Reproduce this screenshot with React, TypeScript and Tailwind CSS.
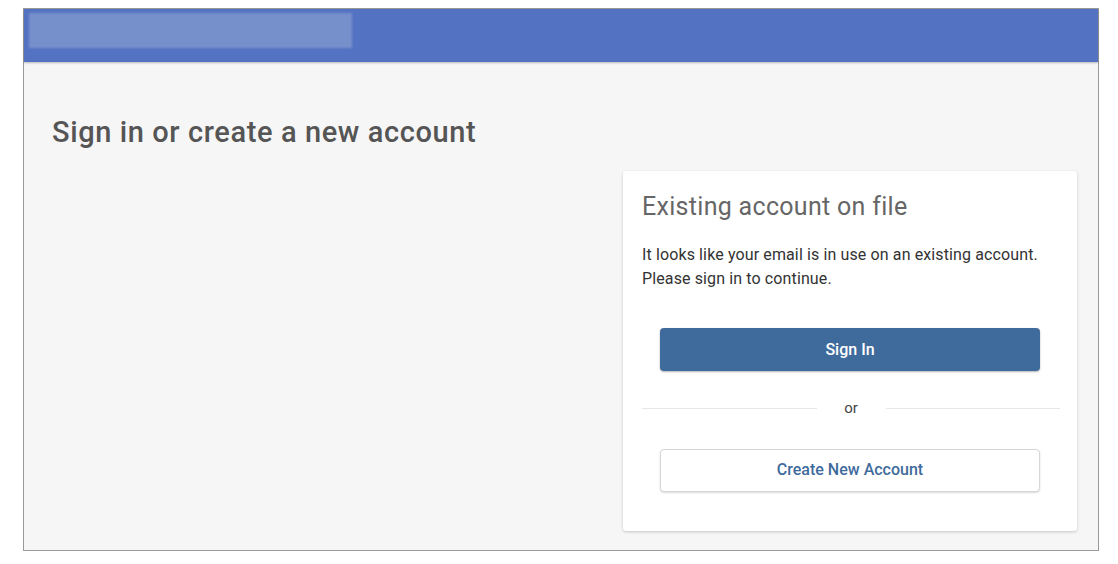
import React from "react";

export default function App() {
  return (
    <div className="w-[1118px] h-[564px] bg-white pt-2 pl-[23px]" style={{ fontFamily: "Roboto, 'Liberation Sans', sans-serif" }}>
      <div className="w-[1076px] h-[543px] border border-[#9a9a9a] bg-[#f6f6f6] flex flex-col">
        <header className="h-[53px] bg-[#5472c2] shadow-[0_1px_2px_rgba(0,0,0,0.25)] pt-1 pl-[5px] shrink-0">
          <div className="w-[323px] h-[35px] bg-[#7590cb] blur-[1px]" />
        </header>
        <div className="flex-1 flex flex-col">
          <h1 className="mt-[54px] ml-[28px] text-[29px] leading-[32px] tracking-[0.6px] text-[#555] font-medium">Sign in or create a new account</h1>
          <div className="flex justify-end pr-[21px] mt-[23px]">
            <div className="w-[454px] h-[360px] bg-white rounded-[3px] shadow-[0_1px_3px_rgba(0,0,0,0.2)] px-[19px] pt-[20px]">
              <h2 className="text-[25px] leading-[32px] tracking-[0.3px] text-[#666]">Existing account on file</h2>
              <p className="mt-[20px] text-[16px] leading-[24px] tracking-[0.12px] text-[#333]">
                It looks like your email is in use on an existing account.<br />Please sign in to continue.
              </p>
              <div className="px-[18px] mt-[37px]">
                <button className="w-full h-[43px] rounded-[4px] bg-[#3f6b9c] text-white text-[16px] font-medium shadow-[0_1px_2px_rgba(0,0,0,0.3)]">Sign In</button>
              </div>
              <div className="flex items-center mt-[26px] -mr-[2px]">
                <div className="flex-1 h-px bg-[#e6e6e6]" />
                <span className="w-[69px] text-center text-[15px] text-[#444]">or</span>
                <div className="flex-1 h-px bg-[#e6e6e6]" />
              </div>
              <div className="px-[18px] mt-[29px]">
                <button className="w-full h-[43px] rounded-[4px] bg-white border border-[#d6d6d6] text-[#3f6b9c] text-[16px] font-medium shadow-[0_1px_2px_rgba(0,0,0,0.15)]">Create New Account</button>
              </div>
            </div>
          </div>
        </div>
      </div>
    </div>
  );
}
